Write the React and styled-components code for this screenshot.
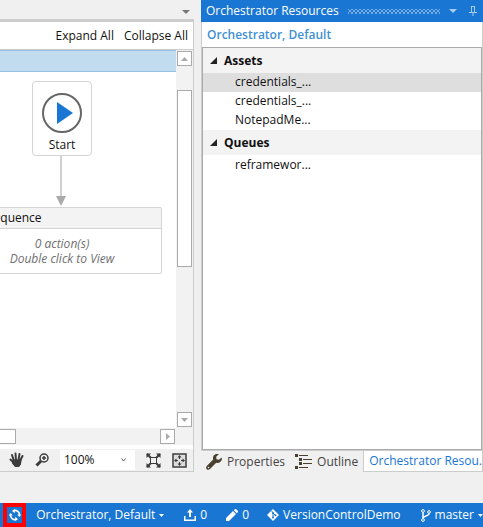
import React from "react";
import styled, { createGlobalStyle } from "styled-components";

const Global = createGlobalStyle`
  * { box-sizing: border-box; }
  body { margin: 0; background: #f0f0f0; color: #111; font: 12px/16px "Open Sans", "Noto Sans", sans-serif; letter-spacing: normal; }
  button, select { font: inherit; color: inherit; margin: 0; padding: 0; border: 0; background: none; }
  svg { display: block; flex: none; }
`;

const Page = styled.div`
  min-height: 100vh;
  display: flex;
  flex-direction: column;
`;
const Workspace = styled.main`
  flex: 1;
  display: grid;
  grid-template-columns: minmax(0, 1fr) 282px;
  gap: 7px;
  padding-bottom: 31px;
`;
const Editor = styled.section`
  display: flex;
  flex-direction: column;
  min-width: 0;
`;
const TabStrip = styled.div`
  height: 19px;
  display: flex;
  justify-content: flex-end;
  align-items: flex-end;
  padding: 0 4px 5px 0;
`;
const Frame = styled.div`
  flex: 1;
  display: flex;
  flex-direction: column;
  background: #fff;
  border: solid #ccc;
  border-width: 3px 1px 1px 0;
`;
const Actions = styled.div`
  height: 28px;
  display: flex;
  justify-content: flex-end;
  gap: 10px;
  padding: 0 5px 0 0;
  border-bottom: 1px solid #ccc;
`;
const TextButton = styled.button`
  font-size: 12px;
  white-space: nowrap;
`;
const Surface = styled.div`
  flex: 1;
  display: grid;
  grid-template-columns: minmax(0, 1fr) 17px;
  grid-template-rows: minmax(0, 1fr) 17px;
`;
const Canvas = styled.div`
  position: relative;
  overflow: hidden;
`;
const Breadcrumb = styled.div`
  height: 22px;
  background: #c1dcee;
  border: solid #91c2e4;
  border-width: 1px 0;
`;
const StartNode = styled.div`
  position: absolute;
  left: 32px;
  top: 31px;
  width: 60px;
  height: 75px;
  padding-top: 11px;
  display: flex;
  flex-direction: column;
  align-items: center;
  gap: 4px;
  background: #fff;
  border: 1px solid #d4d4d4;
  border-radius: 4px;
`;
const Connector = styled.svg`
  position: absolute;
  left: 56px;
  top: 106px;
`;
const SequenceNode = styled.div`
  position: absolute;
  left: -38px;
  top: 157px;
  width: 200px;
  border: 1px solid #d4d4d4;
  border-radius: 2px;
  background: #fff;
`;
const NodeTitle = styled.div`
  height: 21px;
  padding: 2px 0 0 24px;
  background: #f3f3f3;
  border-bottom: 1px solid #d4d4d4;
`;
const NodeBody = styled.div`
  padding: 7px 0;
  text-align: center;
  line-height: 15px;
  font-style: italic;
  color: #707070;
`;
const VerticalScroll = styled.div`
  display: flex;
  flex-direction: column;
  padding: 1px;
  background: #f2f2f2;
`;
const HorizontalScroll = styled.div`
  display: flex;
  justify-content: space-between;
  padding: 1px 1px 1px 0;
  background: #f2f2f2;
`;
const Corner = styled.div`
  background: #f2f2f2;
`;
const ScrollButton = styled.button`
  width: 15px;
  height: 15px;
  display: grid;
  place-items: center;
  background: #fff;
  border: 1px solid #aaa;
`;
const Track = styled.div`
  flex: 1;
  padding-top: 24px;
`;
const Thumb = styled.div`
  height: 177px;
  background: #fff;
  border: 1px solid #aaa;
`;
const WideThumb = styled.div`
  width: 16px;
  background: #fff;
  border: 1px solid #aaa;
  border-left: 0;
`;
const ZoomBar = styled.div`
  height: 22px;
  margin-top: 4px;
  display: flex;
  align-items: center;
  justify-content: flex-end;
  gap: 11px;
  padding-right: 6px;
  background: #f0f0f0;
`;
const IconButton = styled.button`
  display: grid;
  place-items: center;
`;
const ZoomField = styled.label`
  display: grid;
  grid-template-columns: 1fr 12px;
  align-items: center;
  width: 75px;
  height: 20px;
  background: #fff;
  & > * { grid-row: 1; }
  & > svg { grid-column: 2; pointer-events: none; margin-left: -2px; }
`;
const ZoomSelect = styled.select`
  grid-column: 1 / 3;
  height: 20px;
  padding-left: 4px;
  appearance: none;
`;
const Side = styled.aside`
  display: flex;
  flex-direction: column;
  min-width: 0;
`;
const SideBody = styled.div`
  flex: 1;
  display: flex;
  flex-direction: column;
  background: #fff;
  border: solid #ccc;
  border-width: 0 1px 1px;
`;
const SideHeader = styled.header`
  height: 22px;
  display: flex;
  align-items: center;
  padding: 0 6px 0 5px;
  background: #1976d2;
  color: #fff;
`;
const Grip = styled.div`
  flex: 1;
  height: 5px;
  margin: 0 9px;
  background-image: radial-gradient(circle, #75ade4 1px, transparent 1px), radial-gradient(circle, #75ade4 1px, transparent 1px);
  background-size: 4px 4px;
  background-position: 0 0, 2px 2px;
`;
const HeaderIcons = styled.div`
  display: flex;
  align-items: center;
  gap: 12px;
`;
const Folder = styled.h2`
  height: 25px;
  margin: 0;
  padding: 5px 5px 0;
  font-size: 12px;
  line-height: 16px;
  font-weight: 600;
  color: #4290d3;
`;
const Tree = styled.div`
  flex: 1;
  border: 1px solid #aaa;
`;
const Group = styled.button`
  width: 100%;
  height: 25px;
  display: flex;
  align-items: center;
  gap: 7px;
  padding-left: 7px;
  background: #f3f3f3;
  font-weight: 700;
`;
const List = styled.ul`
  list-style: none;
  margin: 0;
  padding: ${(p) => (p.$inset ? "1px 0" : "0")};
`;
const Item = styled.li`
  height: 19px;
  padding: 1px 0 0 32px;
  background: ${(p) => (p.$selected ? "#dedede" : "transparent")};
`;
const Tabs = styled.nav`
  height: 21px;
  display: flex;
`;
const Tab = styled.button`
  display: flex;
  align-items: center;
  gap: 5px;
  padding: 0 5px;
  white-space: nowrap;
  color: #444;
`;
const ActiveTab = styled(Tab)`
  flex: 1;
  min-width: 0;
  margin-left: auto;
  background: #fff;
  color: #1976d2;
  border: solid #ccc;
  border-width: 0 1px 1px;
`;
const StatusBar = styled.footer`
  height: 24px;
  display: flex;
  align-items: center;
  background: #1976d2;
  color: #fff;
`;
const SyncButton = styled.button`
  width: 31px;
  height: 24px;
  margin: 0 10px 0 3px;
  display: grid;
  place-items: center;
  border: 4px solid #f00;
`;
const StatusButton = styled.button`
  display: flex;
  align-items: center;
  gap: 4px;
  margin-right: ${(p) => p.$after || 0}px;
  white-space: nowrap;
`;

const Caret = ({ dir = "down", color = "#fff", w = 5, h = 3 }) => {
  const d = { down: "M0 0H10L5 10Z", up: "M0 10H10L5 0Z", right: "M0 0V10L10 5Z" }[dir];
  return (
    <svg width={w} height={h} viewBox="0 0 10 10" preserveAspectRatio="none" fill={color}><path d={d} /></svg>
  );
};
const Expander = () => (
  <svg width="7" height="7" viewBox="0 0 7 7" fill="#222"><path d="M7 0V7H0Z" /></svg>
);

const PlayIcon = () => (
  <svg width="40" height="40" viewBox="0 0 40 40">
    <circle cx="20" cy="20" r="19" fill="#fff" stroke="#666" strokeWidth="2" />
    <path d="M15 9L31 20L15 31Z" fill="#1976d2" />
  </svg>
);
const HandIcon = () => (
  <svg width="15" height="16" viewBox="0 0 15 16" fill="none" stroke="#3c3c3c" strokeLinecap="round" strokeWidth="2">
    <path d="M5 9L3 3M7 8L6.5 1.5M9.5 8L10.5 2M11 9L13.5 4M5 11L1.5 7.5" />
    <path d="M4.5 8.5H11.5L11 12L9.5 14H6.5L4 11Z" fill="#3c3c3c" />
  </svg>
);
const MagnifierIcon = () => (
  <svg width="14" height="14" viewBox="0 0 14 14" fill="none" stroke="#3c3c3c">
    <circle cx="9" cy="5" r="4" strokeWidth="1.5" />
    <path d="M6 8L1.5 12.5" strokeWidth="3" />
    <path d="M9 3V7M7 5H11" strokeWidth="1.5" />
  </svg>
);
const FitIcon = () => (
  <svg width="15" height="15" viewBox="0 0 15 15" fill="#3c3c3c" stroke="#3c3c3c">
    <rect x="4.5" y="4.5" width="6" height="6" fill="none" />
    <path d="M1 1L5 5M14 1L10 5M1 14L5 10M14 14L10 10" strokeWidth="2" />
    <path d="M.5 .5H5L.5 5ZM14.5 .5H10L14.5 5ZM.5 14.5H5L.5 10ZM14.5 14.5H10L14.5 10Z" stroke="none" />
  </svg>
);
const OverviewIcon = () => (
  <svg width="15" height="15" viewBox="0 0 15 15" fill="#3c3c3c">
    <rect x="1" y="1" width="13" height="13" fill="#ddd" stroke="#3c3c3c" strokeWidth="1.5" />
    <path d="M7.5 2L9.5 4.5H5.5ZM7.5 13L9.5 10.5H5.5ZM2 7.5L4.5 5.5V9.5ZM13 7.5L10.5 5.5V9.5Z" />
    <path d="M4 7H6V8H4ZM9 7H11V8H9ZM7 4H8V6H7ZM7 9H8V11H7Z" />
  </svg>
);
const PinIcon = () => (
  <svg width="8" height="10" viewBox="0 0 8 10" fill="none" stroke="#a9cdf0">
    <path d="M2 .5H6M2.5 0V6M5.5 0V6M0 6.5H8M4 7V10" />
  </svg>
);
const WrenchIcon = () => (
  <svg width="16" height="16" viewBox="0 0 16 16" fill="#48402f">
    <path d="M13 0L10 0C7.500 1 6.500 3 7.200 5.500L.8 12C-.2 13.200 0 14.800 1 15.500C2 16.200 3.200 15.800 4 15L10.200 8.800C13 9.500 15 8 16 5.200L15.600 3.500L13 5.800L10.500 5.200L10.200 2.700Z" />
    <circle cx="2.500" cy="13.500" r=".8" fill="#f0f0f0" />
  </svg>
);
const OutlineIcon = () => (
  <svg width="17" height="15" viewBox="0 0 17 15" fill="#48402f">
    <path d="M0 0H3V3H0ZM0 12H3V15H0ZM4 1H13V2H4ZM4 4H7V7H4ZM8 5H17V6H8ZM4 8H7V11H4ZM8 9H17V10H8ZM4 13H13V14H4Z" />
  </svg>
);
const SyncIcon = () => (
  <svg width="12" height="12" viewBox="0 0 12 12" fill="none" stroke="#fff" strokeWidth="1.600">
    <path d="M4 1.900A4.500 4.500 0 0 1 10.400 7M8 10.100A4.500 4.500 0 0 1 1.600 5" />
    <path d="M5.800 0L3 2L5.800 4.300ZM6.200 12L9 10L6.200 7.700Z" fill="#fff" stroke="none" />
    <path d="M8.300 5.500H12L10.300 8ZM3.700 6.500H0L1.700 4Z" fill="#fff" stroke="none" />
  </svg>
);
const UploadIcon = () => (
  <svg width="12" height="12" viewBox="0 0 12 12" fill="#fff">
    <path d="M6 0L9 3.500H7V8H5V3.500H3ZM0 7H1.500V10.500H10.500V7H12V12H0Z" />
  </svg>
);
const PencilIcon = () => (
  <svg width="12" height="12" viewBox="0 0 12 12" fill="#fff">
    <path d="M0 12V9L7 2L10 5L3 12ZM7.800 1.200L9 0H10L12 2V3L10.800 4.200Z" />
  </svg>
);
const GitIcon = () => (
  <svg width="12" height="12" viewBox="0 0 12 12" fill="#fff">
    <path d="M6 0L12 6L6 12L0 6Z" />
    <path d="M4.500 2L6 3.500V9M6 4L8.500 6.500" fill="none" stroke="#1976d2" />
    <circle cx="6" cy="4" r="1" fill="#1976d2" /><circle cx="6" cy="8.500" r="1" fill="#1976d2" /><circle cx="8.500" cy="6.300" r="1" fill="#1976d2" />
  </svg>
);
const BranchIcon = () => (
  <svg width="10" height="13" viewBox="0 0 10 13" fill="none" stroke="#fff">
    <circle cx="2" cy="2" r="1.400" /><circle cx="8" cy="3" r="1.400" /><circle cx="2" cy="11" r="1.400" />
    <path d="M2 3.500V9.500M8 4.500C8 7.500 2.500 6.500 2.200 9" strokeWidth="1.500" />
  </svg>
);

export default function App() {
  return (
    <Page>
      <Global />
      <Workspace>
        <Editor>
          <TabStrip><IconButton aria-label="Open documents"><Caret color="#777" w={8} h={4} /></IconButton></TabStrip>
          <Frame>
            <Actions>
              <TextButton>Expand All</TextButton>
              <TextButton>Collapse All</TextButton>
            </Actions>
            <Surface>
              <Canvas>
                <Breadcrumb />
                <StartNode><PlayIcon /><span>Start</span></StartNode>
                <Connector width="12" height="51" viewBox="0 0 12 51">
                  <path d="M5 0V42" stroke="#d0d0d0" strokeWidth="2" />
                  <path d="M0 40H10L5 50Z" fill="#aaa" />
                </Connector>
                <SequenceNode>
                  <NodeTitle>Sequence</NodeTitle>
                  <NodeBody>0 action(s)<br />Double click to View</NodeBody>
                </SequenceNode>
              </Canvas>
              <VerticalScroll>
                <ScrollButton aria-label="Scroll up"><Caret dir="up" color="#aaa" w={7} h={4} /></ScrollButton>
                <Track><Thumb /></Track>
                <ScrollButton aria-label="Scroll down"><Caret color="#aaa" w={7} h={4} /></ScrollButton>
              </VerticalScroll>
              <HorizontalScroll>
                <WideThumb />
                <ScrollButton aria-label="Scroll right"><Caret dir="right" color="#aaa" w={4} h={7} /></ScrollButton>
              </HorizontalScroll>
              <Corner />
            </Surface>
            <ZoomBar>
              <IconButton aria-label="Pan"><HandIcon /></IconButton>
              <IconButton aria-label="Reset zoom"><MagnifierIcon /></IconButton>
              <ZoomField>
                <ZoomSelect aria-label="Zoom" defaultValue="100%"><option>100%</option></ZoomSelect>
                <svg width="5" height="4" viewBox="0 0 5 4" fill="none" stroke="#555"><path d="M.5 .5L2.500 3L4.500 .5" /></svg>
              </ZoomField>
              <IconButton aria-label="Fit to screen"><FitIcon /></IconButton>
              <IconButton aria-label="Overview"><OverviewIcon /></IconButton>
            </ZoomBar>
          </Frame>
        </Editor>
        <Side>
          <SideHeader>
            <span>Orchestrator Resources</span>
            <Grip />
            <HeaderIcons>
              <IconButton aria-label="Panel menu"><Caret color="#a9cdf0" w={8} h={4} /></IconButton>
              <IconButton aria-label="Pin panel"><PinIcon /></IconButton>
            </HeaderIcons>
          </SideHeader>
          <SideBody>
            <Folder>Orchestrator, Default</Folder>
            <Tree>
              <Group aria-expanded="true"><Expander />Assets</Group>
              <List>
                <Item $selected>credentials_...</Item>
                <Item>credentials_...</Item>
                <Item>NotepadMe...</Item>
              </List>
              <Group aria-expanded="true"><Expander />Queues</Group>
              <List $inset><Item>reframewor...</Item></List>
            </Tree>
          </SideBody>
          <Tabs>
            <Tab><WrenchIcon />Properties</Tab>
            <Tab><OutlineIcon />Outline</Tab>
            <ActiveTab>Orchestrator Resou...</ActiveTab>
          </Tabs>
        </Side>
      </Workspace>
      <StatusBar>
        <SyncButton aria-label="Synchronize"><SyncIcon /></SyncButton>
        <StatusButton $after={20}>Orchestrator, Default<Caret /></StatusButton>
        <StatusButton $after={19}><UploadIcon />0</StatusButton>
        <StatusButton $after={18}><PencilIcon />0</StatusButton>
        <StatusButton $after={20}><GitIcon />VersionControlDemo</StatusButton>
        <StatusButton><BranchIcon />master<Caret /></StatusButton>
      </StatusBar>
    </Page>
  );
}
